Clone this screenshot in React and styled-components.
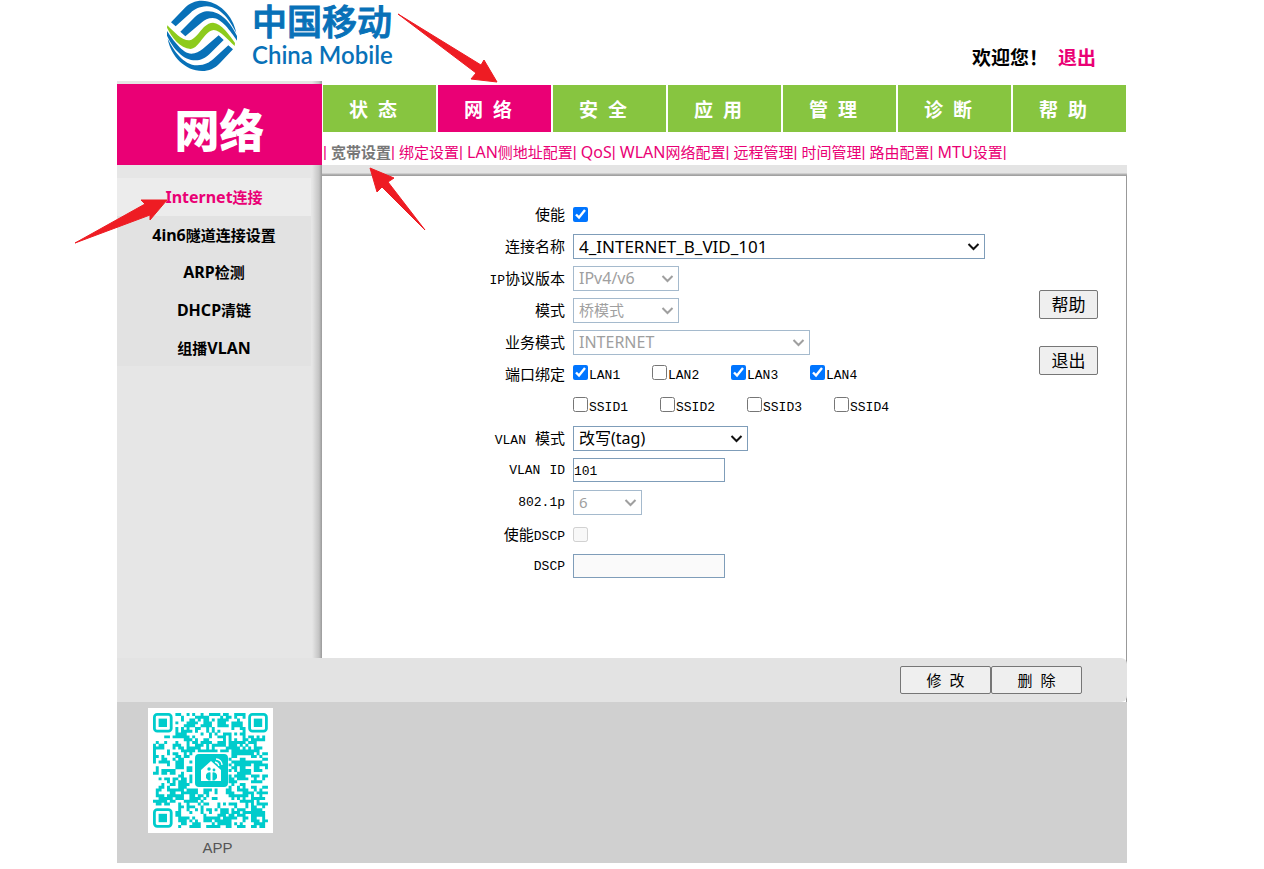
import React from "react";
import styled, { createGlobalStyle } from "styled-components";

const PINK = "#ea0075";
const GREEN = "#87c540";
const BLUE = "#0871b8";
const TEAL = "#00cccc";
const UI = '"Noto Sans", "Noto Sans CJK SC", sans-serif';
const FORM = '"Liberation Mono", "Noto Sans CJK SC", monospace';

const GlobalStyle = createGlobalStyle`
  * { box-sizing: border-box; }
  body {
    margin: 0;
    padding-right: 20px;
    background: #fff;
    color: #000;
    font-family: ${UI};
    font-size: 15px;
  }
  a { color: inherit; text-decoration: none; }
  ul { list-style: none; margin: 0; padding: 0; }
`;

const Page = styled.div`
  position: relative;
  max-width: 1010px;
  margin: 0 auto;
`;

const Header = styled.header`
  display: flex;
  justify-content: space-between;
  align-items: flex-start;
  height: 81px;
  padding: 0 31px 0 47px;
`;

const Brand = styled.div`
  display: flex;
  gap: 12px;
  color: ${BLUE};
`;

const BrandNames = styled.div`
  display: flex;
  flex-direction: column;
`;

const BrandCn = styled.span`
  font: 500 35px/42px Lato, "Noto Sans CJK SC", sans-serif;
  -webkit-text-stroke: 1px ${BLUE};
`;

const BrandEn = styled.span`
  font: 600 24px/26px Lato, sans-serif;
`;

const Welcome = styled.div`
  display: flex;
  gap: 10px;
  padding-top: 44px;
  font: bold 19px/26px "Noto Sans CJK SC", sans-serif;
`;

const LogoutLink = styled.a`
  color: ${PINK};
`;

const Columns = styled.div`
  display: grid;
  grid-template-columns: 205px 1fr;
`;

const Sidebar = styled.aside`
  padding-top: 3px;
  background: linear-gradient(to left, #999, #c4c4c4 3px, #e6e6e6 10px);
`;

const SectionTitle = styled.h1`
  margin: 0 0 13px;
  height: 81px;
  padding-top: 10px;
  background: ${PINK};
  color: #fff;
  text-align: center;
  font: 900 45px/69px "Noto Sans CJK SC", sans-serif;
`;

const SideList = styled.ul`
  display: grid;
  grid-auto-rows: 1fr;
  min-height: 188px;
  margin-right: 11px;
`;

const SideItem = styled.li`
  display: grid;
  place-items: center;
  background: ${(p) => (p.$active ? "#ececec" : "#e2e2e2")};
  color: ${(p) => (p.$active ? PINK : "#000")};
  font-weight: bold;
`;

const Main = styled.main`
  display: flex;
  flex-direction: column;
`;

const Tabs = styled.nav`
  display: grid;
  grid-template-columns: repeat(7, 1fr);
  gap: 2px;
  margin: 4px 1px 0;
`;

const Tab = styled.a`
  display: grid;
  place-items: center;
  height: 47px;
  padding-right: 3px;
  background: ${(p) => (p.$active ? PINK : GREEN)};
  color: #fff;
  font-size: 19px;
  font-weight: bold;
`;

const SubNav = styled.nav`
  display: flex;
  height: 33px;
  padding: 8px 0 0 1px;
  line-height: 24px;
  color: ${PINK};
  white-space: nowrap;
`;

const SubLink = styled.a`
  color: ${(p) => (p.$active ? "#777" : PINK)};
  font-weight: ${(p) => (p.$active ? "bold" : "normal")};
`;

const Bar = styled.span`
  width: 8px;
  font-family: "Liberation Sans", sans-serif;
`;

const Latin = styled.span`
  font-size: ${(p) => p.$size || 16}px;
  line-height: 1;
`;

const Shade = styled.div`
  height: 11px;
  background: linear-gradient(#e4e4e4 8px, #b8b8b8 9px, #999);
`;

const Content = styled.section`
  display: flex;
  justify-content: space-between;
  min-height: 482px;
  padding: 22px 28px 0 0;
  border-right: 1px solid #999;
`;

const Form = styled.form`
  flex: 1;
`;

const Row = styled.div`
  display: grid;
  grid-template-columns: 243px 1fr;
  gap: 8px;
  align-items: center;
  height: 32px;
  font-family: ${FORM};
`;

const FieldName = styled.label`
  text-align: right;
  white-space: pre;
`;

const Control = styled.div`
  display: flex;
`;

const SelectBox = styled.div`
  position: relative;
  width: ${(p) => p.$width}px;
  opacity: ${(p) => (p.$disabled ? 0.7 : 1)};
`;

const SelectInput = styled.select`
  appearance: none;
  display: block;
  width: 100%;
  height: 25px;
  padding: 0 24px 0 5px;
  border: 1px solid #7f9db9;
  border-radius: 0;
  background: #fff;
  font-family: ${UI};
  font-size: ${(p) => p.$size || 16}px;
  color: #000;
  &:disabled {
    color: #777;
    opacity: 1;
  }
`;

const Chevron = styled.svg`
  position: absolute;
  right: 5px;
  top: 8px;
  fill: none;
  stroke: ${(p) => (p.$disabled ? "#777" : "#111")};
  stroke-width: 2px;
  pointer-events: none;
`;

const TextBox = styled.input`
  width: 152px;
  height: 24px;
  padding: 2px 0 0;
  border: 1px solid #7f9db9;
  background: #fff;
  font-family: ${FORM};
  font-size: 13px;
  &:disabled {
    background: #fafafa;
  }
`;

const Check = styled.input`
  width: 15px;
  height: 15px;
  margin: 0;
  accent-color: #0075ff;
`;

const Choices = styled.div`
  display: grid;
  grid-template-columns: repeat(4, ${(p) => p.$pitch}px);
`;

const Choice = styled.label`
  display: flex;
  align-items: flex-start;
  gap: 1px;
  height: 18px;
  font-size: 13px;
`;

const ChoiceText = styled.span`
  line-height: 22px;
`;

const Actions = styled.div`
  display: flex;
  flex-direction: column;
  gap: 27px;
  padding-top: 92px;
`;

const Button = styled.button`
  width: ${(p) => p.$width}px;
  height: ${(p) => p.$height}px;
  padding: 0;
  border: 1px solid #767676;
  border-radius: 2px;
  background: #efefef;
  color: #000;
  font-family: ${UI};
  font-size: ${(p) => p.$size}px;
  line-height: 20px;
`;

const BarBack = styled.div`
  border-right: 1px solid #999;
`;

const ButtonBar = styled.div`
  display: flex;
  justify-content: flex-end;
  align-items: center;
  height: 44px;
  margin-right: -1px;
  padding-right: 45px;
  border-radius: 0 6px 6px 0;
  background: #e3e3e3;
`;

const Footer = styled.footer`
  padding: 6px 31px 0;
  background: #d0d0d0;
`;

const AppCode = styled.figure`
  display: inline-flex;
  flex-direction: column;
  margin: 0;
`;

const AppName = styled.figcaption`
  padding-left: 14px;
  height: 30px;
  color: #555;
  text-align: center;
  font: 15px/29px "Liberation Sans", sans-serif;
`;

const Pointers = styled.svg`
  position: absolute;
  top: 0;
  left: -117px;
  width: 500px;
  height: 260px;
  overflow: visible;
  pointer-events: none;
`;

/* Latin runs are set in their own size beside the Chinese characters. */
function Mixed({ text, size }) {
  return text.split(/([A-Za-z0-9.]+)/).map((part, i) =>
    i % 2 ? (
      <Latin key={i} $size={size}>
        {part}
      </Latin>
    ) : (
      part
    )
  );
}

function Select({ id, width, size, disabled, children }) {
  return (
    <SelectBox $width={width} $disabled={disabled}>
      <SelectInput id={id} $size={size} disabled={disabled}>
        {children}
      </SelectInput>
      <Chevron $disabled={disabled} width="13" height="9" viewBox="0 0 13 9" aria-hidden="true">
        <path d="M1.500 2 L6.500 7 L11.500 2" />
      </Chevron>
    </SelectBox>
  );
}

const UPPER_OUTER =
  "M21 67 L60 26 C76 9 94 2 113 2 C165 3 207 46 217 99 C200 66 172 20 128 19 C104 20 92 28 80 38 L35 79 Z";
const UPPER_INNER =
  "M49 95 L92 52 C106 39 118 34 133 34 C170 34 200 68 219 108 L219 122 C200 94 172 54 146 54 C132 54 122 60 112 68 L64 109 Z";

function Logo() {
  return (
    <svg width="76" height="74" viewBox="0 0 228 222" aria-hidden="true">
      <g fill={BLUE}>
        <path d={UPPER_OUTER} />
        <path d={UPPER_INNER} />
        <g transform="rotate(180 114 107.500)">
          <path d={UPPER_OUTER} />
          <path d={UPPER_INNER} />
        </g>
      </g>
      <path
        fill="#8dcb1c"
        d="M10 76 C32 98 55 123 77 121 C92 118 106 96 120 81 C130 72 138 68 147 68 C172 70 196 104 213 129 L212 138 C191 118 169 92 149 90 C133 92 122 108 108 126 C98 139 90 146 80 147 C48 145 23 111 9 83 Z"
      />
    </svg>
  );
}

const MODULES = 41;

function inFinder(x, y) {
  const edge = MODULES - 8;
  return (x < 8 && y < 8) || (x >= edge && y < 8) || (x < 8 && y >= edge);
}

function codePath() {
  let seed = 90817;
  const next = () => {
    seed = (seed * 16807) % 2147483647;
    return seed / 2147483647;
  };
  let d = "";
  let above = [];
  for (let y = 0; y < MODULES; y++) {
    const row = [];
    for (let x = 0; x < MODULES; x++) {
      const pick = next();
      const fresh = next() < 0.53;
      if (pick < 0.1 && x > 0) row.push(row[x - 1]);
      else if (pick < 0.2 && y > 0) row.push(above[x]);
      else row.push(fresh);
      const centre = x > 13 && x < 27 && y > 13 && y < 27;
      if (row[x] && !inFinder(x, y) && !centre) d += `M${x} ${y}h1.05v1.05h-1.05z`;
    }
    above = row;
  }
  return d;
}

const CODE = codePath();

function Finder({ x, y }) {
  return (
    <g transform={`translate(${x} ${y})`}>
      <rect x="0.5" y="0.5" width="6" height="6" rx="1" fill="none" stroke={TEAL} />
      <rect x="2" y="2" width="3" height="3" fill={TEAL} />
    </g>
  );
}

function QrCode() {
  return (
    <svg width="125" height="125" viewBox="0 0 125 125" role="img" aria-label="APP">
      <rect width="125" height="125" fill="#fff" />
      <g transform="translate(5 5) scale(2.8)">
        <path d={CODE} fill={TEAL} />
        <Finder x={0} y={0} />
        <Finder x={34} y={0} />
        <Finder x={0} y={34} />
      </g>
      <rect x="47" y="46" width="33" height="33" rx="4" fill={TEAL} />
      <path d="M53 62 L63 53 L73 62 V73 H53 Z" fill="#fff" />
      <g fill={TEAL}>
        <circle cx="61" cy="61" r="1.700" />
        <circle cx="66" cy="62" r="1.400" />
        <path d="M58 67 a3.500 3.500 0 0 1 4.500 -2.500 v8 h-2 l-2.500 -2.500z" />
        <path d="M69 67 a3.500 3.500 0 0 0 -4.500 -2.500 v8 h2 l2.500 -2.500z" />
      </g>
      <g fill="none" stroke="#fff" strokeWidth="1.300">
        <path d="M68 51 a6 6 0 0 1 6 6" />
        <path d="M67 54 a5 5 0 0 1 4 4" />
      </g>
    </svg>
  );
}

const SIDE = ["Internet连接", "4in6隧道连接设置", "ARP检测", "DHCP清链", "组播VLAN"];
const TABS = ["状态", "网络", "安全", "应用", "管理", "诊断", "帮助"];
const SUBS = [
  "宽带设置",
  "绑定设置",
  "LAN侧地址配置",
  "QoS",
  "WLAN网络配置",
  "远程管理",
  "时间管理",
  "路由配置",
  "MTU设置",
];

function Field({ name, id, children }) {
  return (
    <Row>
      <FieldName htmlFor={id}>
        <Mixed text={name} size={13} />
      </FieldName>
      <Control>{children}</Control>
    </Row>
  );
}

function Ports({ names, checked = [], pitch }) {
  return (
    <Choices $pitch={pitch}>
      {names.map((n) => (
        <Choice key={n}>
          <Check type="checkbox" defaultChecked={checked.includes(n)} />
          <ChoiceText>{n}</ChoiceText>
        </Choice>
      ))}
    </Choices>
  );
}

export default function App() {
  return (
    <>
      <GlobalStyle />
      <Page>
        <Header>
          <Brand>
            <Logo />
            <BrandNames>
              <BrandCn>中国移动</BrandCn>
              <BrandEn>China Mobile</BrandEn>
            </BrandNames>
          </Brand>
          <Welcome>
            <span>欢迎您！</span>
            <LogoutLink href="#logout">退出</LogoutLink>
          </Welcome>
        </Header>

        <Columns>
          <Sidebar>
            <SectionTitle>网络</SectionTitle>
            <SideList>
              {SIDE.map((s, i) => (
                <SideItem key={s} $active={i === 0}>
                  <a href="#side">
                    <Mixed text={s} />
                  </a>
                </SideItem>
              ))}
            </SideList>
          </Sidebar>

          <Main>
            <Tabs>
              {TABS.map((t) => (
                <Tab key={t} href="#tab" $active={t === "网络"}>
                  {`${t[0]}\u00a0\u00a0${t[1]}\u00a0\u00a0`}
                </Tab>
              ))}
            </Tabs>
            <SubNav>
              <Bar>|</Bar>
              {SUBS.map((s, i) => (
                <React.Fragment key={s}>
                  <SubLink href="#sub" $active={i === 0}>
                    <Mixed text={s} />
                  </SubLink>
                  <Bar>|</Bar>
                </React.Fragment>
              ))}
            </SubNav>
            <Shade />
            <Content>
              <Form>
                <Field name="使能" id="enable">
                  <Check id="enable" type="checkbox" defaultChecked />
                </Field>
                <Field name="连接名称" id="conn">
                  <Select id="conn" width={412} size={17}>
                    <option>4_INTERNET_B_VID_101</option>
                  </Select>
                </Field>
                <Field name="IP协议版本" id="ipver">
                  <Select id="ipver" width={106} disabled>
                    <option>IPv4/v6</option>
                  </Select>
                </Field>
                <Field name="模式" id="mode">
                  <Select id="mode" width={106} size={15} disabled>
                    <option>桥模式</option>
                  </Select>
                </Field>
                <Field name="业务模式" id="service">
                  <Select id="service" width={237} disabled>
                    <option>INTERNET</option>
                  </Select>
                </Field>
                <Field name="端口绑定">
                  <Ports
                    pitch={79}
                    names={["LAN1", "LAN2", "LAN3", "LAN4"]}
                    checked={["LAN1", "LAN3", "LAN4"]}
                  />
                </Field>
                <Field name="">
                  <Ports pitch={87} names={["SSID1", "SSID2", "SSID3", "SSID4"]} />
                </Field>
                <Field name="VLAN 模式" id="vmode">
                  <Select id="vmode" width={175}>
                    <option>改写(tag)</option>
                  </Select>
                </Field>
                <Field name="VLAN ID" id="vid">
                  <TextBox id="vid" defaultValue="101" />
                </Field>
                <Field name="802.1p" id="prio">
                  <Select id="prio" width={69} size={15} disabled>
                    <option>6</option>
                  </Select>
                </Field>
                <Field name="使能DSCP" id="dscpOn">
                  <Check id="dscpOn" type="checkbox" disabled />
                </Field>
                <Field name="DSCP" id="dscp">
                  <TextBox id="dscp" disabled />
                </Field>
              </Form>
              <Actions>
                <Button type="button" $width={59} $height={29} $size={17}>
                  帮助
                </Button>
                <Button type="button" $width={59} $height={29} $size={17}>
                  退出
                </Button>
              </Actions>
            </Content>
          </Main>
        </Columns>

        <BarBack>
          <ButtonBar>
            <Button type="button" $width={91} $height={28} $size={15}>
              {"修\u00a0\u00a0改"}
            </Button>
            <Button type="button" $width={91} $height={28} $size={15}>
              {"删\u00a0\u00a0除"}
            </Button>
          </ButtonBar>
        </BarBack>

        <Footer>
          <AppCode>
            <QrCode />
            <AppName>APP</AppName>
          </AppCode>
        </Footer>

        <Pointers viewBox="0 0 500 260" aria-hidden="true">
          <g fill="#ee1c23" stroke="#ee1c23">
            <path d="M398 14 L481 65 L484 60 L497 82 L471 79 L476 73 Z" />
            <path d="M370 168 L394 178 L388 182 L425 230 L382 187 L377 192 Z" />
            <path d="M167 200 L150 220 L150 215 L75 243 L145 204 L141 200 Z" />
          </g>
        </Pointers>
      </Page>
    </>
  );
}
